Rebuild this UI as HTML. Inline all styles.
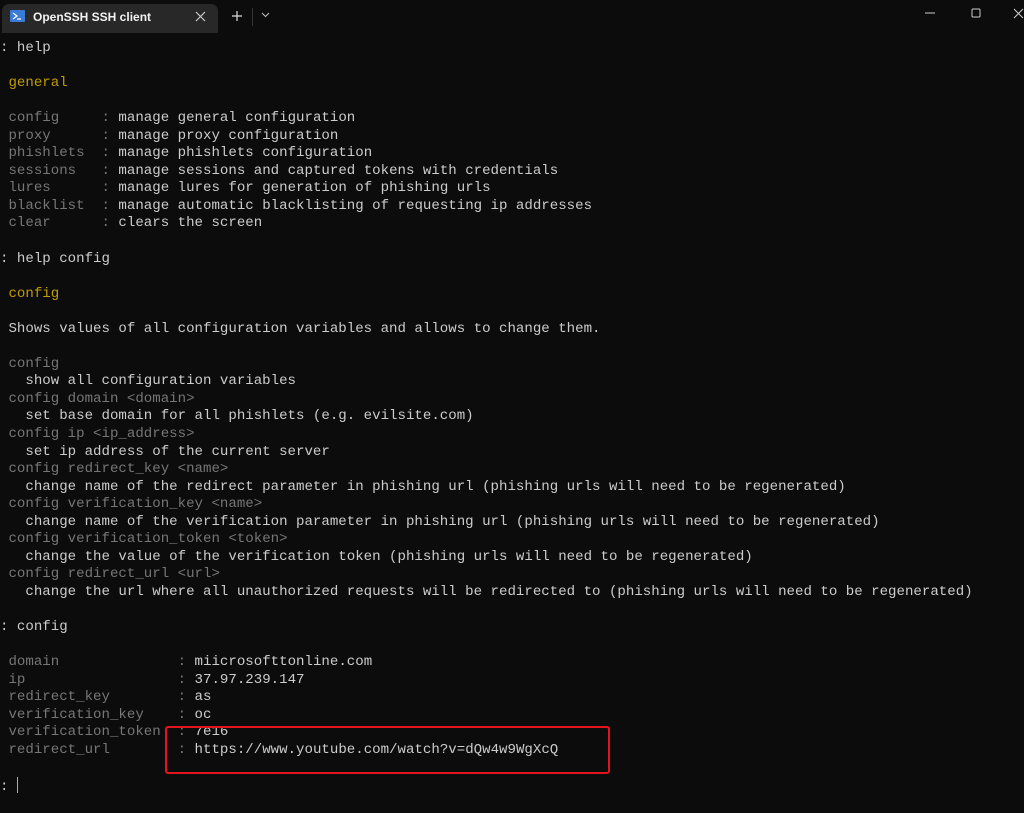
<!DOCTYPE html>
<html><head><meta charset="utf-8"><style>
html,body{margin:0;padding:0;background:#0c0c0c;width:1024px;height:813px;overflow:hidden}
.tab{position:absolute;left:2px;top:4px;width:216px;height:29px;background:#282828;border-radius:7px 7px 0 0}
.tabt{position:absolute;left:33px;top:10px;font:600 12px "Liberation Sans",sans-serif;color:#f2f2f2}
pre{position:absolute;left:0;top:40px;margin:0;font:14.1px/17.55px "Liberation Mono",monospace;color:#cccccc}
.d{color:#767676}.y{color:#c19c00}
.box{position:absolute;left:165px;top:726px;width:441px;height:44px;border:2px solid #e3141b;border-radius:3px}
</style></head><body>
<div class="tab"></div>
<svg style="position:absolute;left:10px;top:10px" width="15" height="12"><rect width="15" height="12" rx="1" fill="#3a7bd5"/><path d="M3 3l4 3-4 3M7 9h4" stroke="#fff" stroke-width="1.2" fill="none"/></svg>
<div class="tabt">OpenSSH SSH client</div>
<svg style="position:absolute;left:195px;top:11px" width="11" height="11"><path d="M1 1l9 9M10 1l-9 9" stroke="#ccc" stroke-width="1.2"/></svg>
<svg style="position:absolute;left:231px;top:10px" width="12" height="12"><path d="M6 1v10M1 6h10" stroke="#ddd" stroke-width="1.2"/></svg>
<div style="position:absolute;left:252px;top:8px;width:1px;height:18px;background:#333"></div>
<svg style="position:absolute;left:261px;top:12px" width="9" height="6"><path d="M1 1l3.5 3.5L8 1" stroke="#bbb" stroke-width="1.1" fill="none"/></svg>
<svg style="position:absolute;left:925px;top:12px" width="11" height="3"><path d="M0 1h10" stroke="#ccc" stroke-width="1"/></svg>
<svg style="position:absolute;left:971px;top:8px" width="11" height="11"><rect x="1" y="1" width="8" height="8" rx="1" stroke="#ccc" fill="none"/></svg>
<svg style="position:absolute;left:1013px;top:8px" width="11" height="11"><path d="M1 1l9 9M10 1l-9 9" stroke="#ccc" stroke-width="1"/></svg>
<pre>: help

 <span class="y">general</span>

 <span class="d">config     :</span> manage general configuration
 <span class="d">proxy      :</span> manage proxy configuration
 <span class="d">phishlets  :</span> manage phishlets configuration
 <span class="d">sessions   :</span> manage sessions and captured tokens with credentials
 <span class="d">lures      :</span> manage lures for generation of phishing urls
 <span class="d">blacklist  :</span> manage automatic blacklisting of requesting ip addresses
 <span class="d">clear      :</span> clears the screen

: help config

 <span class="y">config</span>

 Shows values of all configuration variables and allows to change them.

 <span class="d">config</span>
   show all configuration variables
 <span class="d">config domain &lt;domain&gt;</span>
   set base domain for all phishlets (e.g. evilsite.com)
 <span class="d">config ip &lt;ip_address&gt;</span>
   set ip address of the current server
 <span class="d">config redirect_key &lt;name&gt;</span>
   change name of the redirect parameter in phishing url (phishing urls will need to be regenerated)
 <span class="d">config verification_key &lt;name&gt;</span>
   change name of the verification parameter in phishing url (phishing urls will need to be regenerated)
 <span class="d">config verification_token &lt;token&gt;</span>
   change the value of the verification token (phishing urls will need to be regenerated)
 <span class="d">config redirect_url &lt;url&gt;</span>
   change the url where all unauthorized requests will be redirected to (phishing urls will need to be regenerated)

: config

 <span class="d">domain              :</span> miicrosofttonline.com
 <span class="d">ip                  :</span> 37.97.239.147
 <span class="d">redirect_key        :</span> as
 <span class="d">verification_key    :</span> oc
 <span class="d">verification_token  :</span> 7e16
 <span class="d">redirect_url        :</span> https://www.youtube.com/watch?v=dQw4w9WgXcQ

: <span style="display:inline-block;width:1px;height:16px;background:#aaa;vertical-align:-3px"></span></pre>
<div class="box"></div>
</body></html>
